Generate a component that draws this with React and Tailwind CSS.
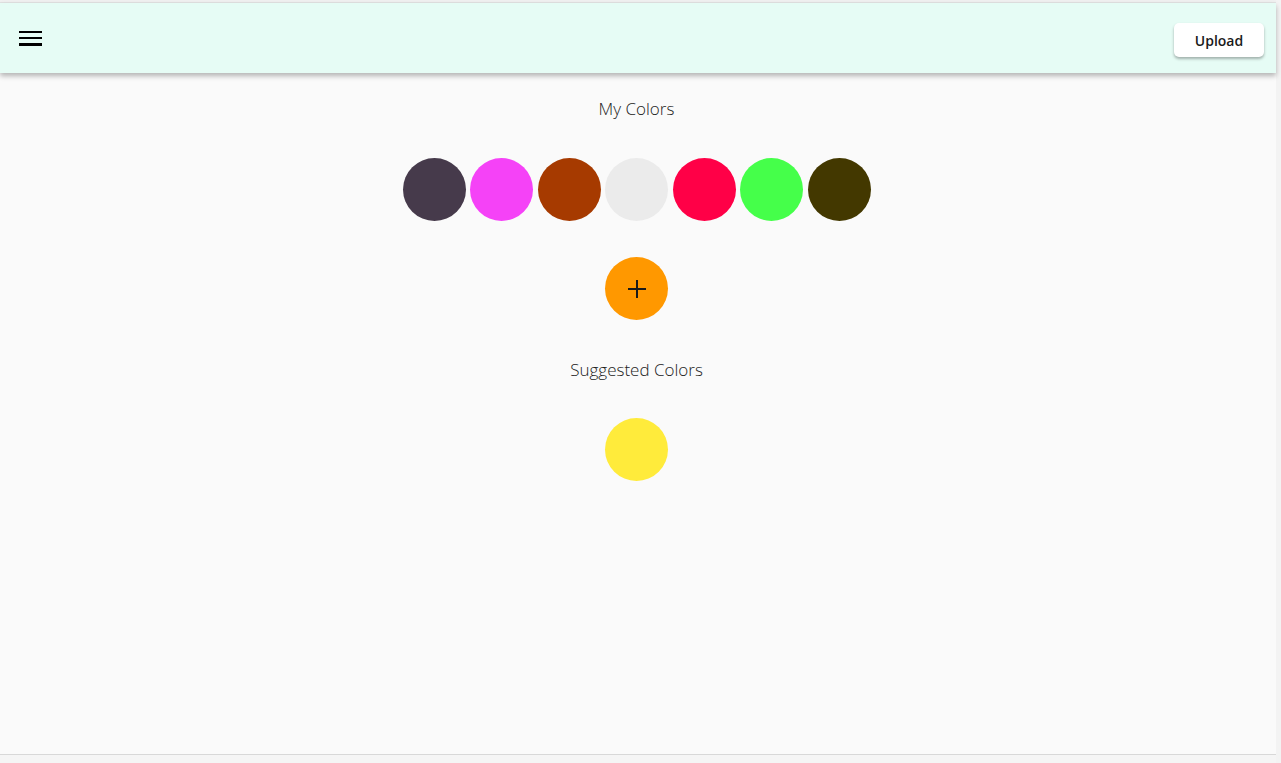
import { useState } from 'react';

const myColors = ['#463a4b', '#f542f7', '#a63a00', '#ebebeb', '#ff0047', '#45ff4a', '#433800'];
const suggested = ['#ffeb3b'];

const Swatch = ({ color }) => (
  <div className="w-[63px] h-[63px] rounded-full" style={{ backgroundColor: color }} />
);

const App = () => {
  const [colors] = useState(myColors);

  return (
    <div className="w-[1281px] h-[763px] bg-[#f3f3f3] flex flex-col overflow-hidden font-['Open_Sans','Noto_Sans',sans-serif]">
      <div className="h-[3px] bg-[#f0f0f0] border-b border-[#e2e2e2] w-[1276px]" />
      <div className="w-[1276px] flex-1 flex flex-col bg-[#fafafa] border-b border-[#d8d8d8]">
        <header className="relative z-10 h-[70px] bg-[#e6fcf5] flex items-center justify-between pl-[19px] pr-[12px] shadow-[0_3px_5px_rgba(0,0,0,0.28)]">
          <button className="w-[23px] h-[15px] flex flex-col justify-between">
            <span className="block h-[2.5px] w-full bg-black" />
            <span className="block h-[2.5px] w-full bg-black" />
            <span className="block h-[2.5px] w-full bg-black" />
          </button>
          <button className="w-[90px] h-[34px] bg-white rounded-[5px] text-[14px] font-semibold text-[#1a1a1a] shadow-[0_2px_3px_rgba(0,0,0,0.3)] mt-[4px]">
            Upload
          </button>
        </header>

        <main className="w-[1273px] flex flex-col items-center pt-[24px]">
          <h2 className="text-[17px] font-light text-[#222] leading-[24px]">My Colors</h2>
          <div className="flex gap-[4.5px] mt-[37px]">
            {colors.map((c, i) => (
              <Swatch key={i} color={c} />
            ))}
          </div>
          <button className="mt-[36px] w-[63px] h-[63px] rounded-full bg-[#ff9800] flex items-center justify-center">
            <svg width="20" height="20" viewBox="0 0 20 20">
              <path d="M10 1v18M1 10h18" stroke="#1a1a1a" strokeWidth="2" />
            </svg>
          </button>
          <h2 className="mt-[38px] text-[17px] font-light text-[#222] leading-[24px]">Suggested Colors</h2>
          <div className="flex gap-[4.5px] mt-[36px]">
            {suggested.map((c, i) => (
              <Swatch key={i} color={c} />
            ))}
          </div>
        </main>
      </div>
      <div className="h-[8px] w-[1276px] bg-[#f5f5f5]" />
    </div>
  );
};

export default App;
